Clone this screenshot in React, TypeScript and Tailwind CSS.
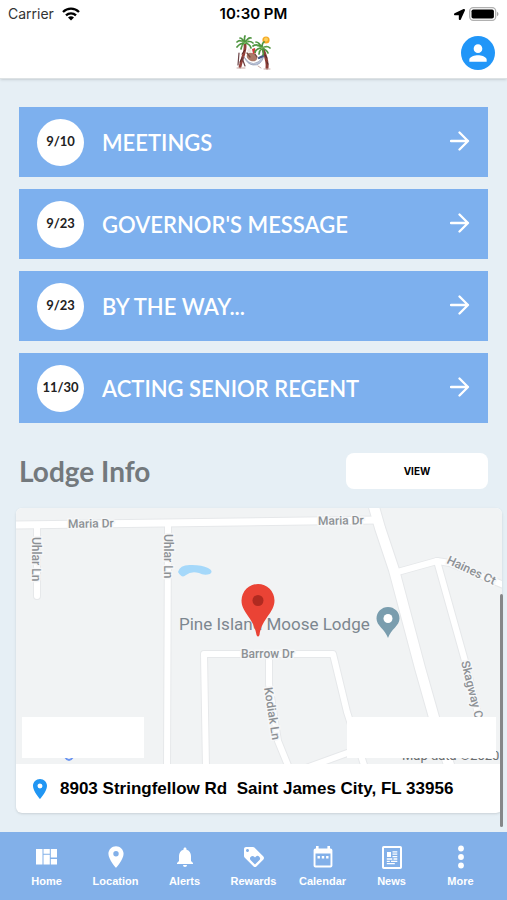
import type { ReactNode } from 'react';
import { FaLocationArrow } from 'react-icons/fa';
import {
  MdLocationOn,
  MdLoyalty,
  MdNotifications,
  MdPerson,
} from 'react-icons/md';

interface Post {
  date: string;
  title: string;
}

interface NavItem {
  label: string;
  icon: ReactNode;
}

const posts: Post[] = [
  { date: '9/10', title: 'MEETINGS' },
  { date: '9/23', title: "GOVERNOR'S MESSAGE" },
  { date: '9/23', title: 'BY THE WAY...' },
  { date: '11/30', title: 'ACTING SENIOR REGENT' },
];

const navItems: NavItem[] = [
  { label: 'Home', icon: <HomeIcon /> },
  { label: 'Location', icon: <MdLocationOn size={26} /> },
  { label: 'Alerts', icon: <MdNotifications size={24} /> },
  { label: 'Rewards', icon: <MdLoyalty size={24} /> },
  { label: 'Calendar', icon: <CalendarIcon /> },
  { label: 'News', icon: <NewsIcon /> },
  { label: 'More', icon: <MoreIcon /> },
];

function HomeIcon() {
  return (
    <svg width="22" height="16" viewBox="0 0 22 16" fill="currentColor">
      <path d="M0 0h6.5v15.5H0zM7.5 0h6.3v4.8H7.5zM7.5 5.8h6.3v9.7H7.5zM14.8 0H21v8.6h-6.2zM14.8 10H21v5.5h-6.2z" />
    </svg>
  );
}

function CalendarIcon() {
  return (
    <svg width="20" height="22" viewBox="0 0 20 22" fill="currentColor">
      <path
        fillRule="evenodd"
        d="M3 0h2.6v2.5h8.8V0H17v2.5h.6A1.8 1.8 0 0 1 19.4 4.3v15.4a1.8 1.8 0 0 1-1.8 1.8H2.4a1.8 1.8 0 0 1-1.8-1.8V4.3A1.8 1.8 0 0 1 2.4 2.5H3zM2.5 7.5v12h15v-12z"
      />
      <path d="M4.5 10h2.400v2.400H4.500zM8.800 10h2.400v2.400H8.800zM13.100 10h2.400v2.400h-2.400z" />
    </svg>
  );
}

function NewsIcon() {
  return (
    <svg width="20" height="23" viewBox="0 0 20 23" fill="none" stroke="currentColor">
      <rect x="1" y="1" width="18" height="21" rx="0.8" strokeWidth="2" />
      <path d="M5 6h4v5H5z" fill="currentColor" stroke="none" />
      <path
        d="M10.5 5.8h4.8M10.5 8.2h4.8M10.5 10.6h4.8M4.8 13h5.5M11.5 13h3.8M4.8 15.3h3M9 15.3h6.3M4.8 17.6h8"
        strokeWidth="1.3"
      />
    </svg>
  );
}

function MoreIcon() {
  return (
    <svg width="8" height="24" viewBox="0 0 8 24" fill="currentColor">
      <circle cx="4" cy="3.5" r="2.9" />
      <circle cx="4" cy="12" r="2.9" />
      <circle cx="4" cy="20.5" r="2.9" />
    </svg>
  );
}

function ArrowIcon() {
  return (
    <svg
      width="20"
      height="22"
      viewBox="0 0 20 22"
      fill="none"
      stroke="currentColor"
      strokeWidth="2.3"
      strokeLinecap="round"
      strokeLinejoin="round"
    >
      <path d="M1 10h17M9.5 1.500l8.500 8.500-8.500 8.500" />
    </svg>
  );
}

function WifiIcon() {
  return (
    <svg width="18" height="14" viewBox="0 0 18 14" fill="none" stroke="#000" strokeWidth="2.3">
      <path d="M1 5a11.4 11.4 0 0 1 16 0" />
      <path d="M4 8.3a7.2 7.2 0 0 1 10 0" />
      <path d="M9 13.6L6 10.6a4.3 4.3 0 0 1 6 0z" fill="#000" stroke="none" />
    </svg>
  );
}

function BatteryIcon() {
  return (
    <svg width="30" height="14" viewBox="0 0 30 14" fill="none">
      <rect x="0.7" y="0.7" width="26" height="12.6" rx="3.5" stroke="#b0b0b0" strokeWidth="1.3" />
      <rect x="2.5" y="2.5" width="22.4" height="9" rx="1.8" fill="#000" />
      <path d="M28 4.8c2 .8 2 3.6 0 4.4z" fill="#a5a5a5" />
    </svg>
  );
}

function LodgeLogo() {
  return (
    <svg width="38" height="36" viewBox="0 0 38 36" fill="none" strokeLinecap="round">
      <circle cx="31" cy="5" r="3.6" fill="#f6a821" />
      <circle cx="31" cy="4.500" r="2" fill="#fbd05f" />
      {/* palm trunks */}
      <path d="M10 9c1 8-3 13-5 23" stroke="#93403a" strokeWidth="2.8" />
      <path d="M10 15l-3 4M7 23l-2 4" stroke="#532727" strokeWidth="1" />
      <path d="M28 14c2 6 5 12 4 19" stroke="#8a3c35" strokeWidth="3" />
      <path d="M30 20l2 3M32 27l1 2" stroke="#4d2929" strokeWidth="1" />
      <path d="M4 18l-1 12M7 23l3 8" stroke="#6b4144" strokeWidth="1.2" />
      {/* hammock */}
      <path d="M9 22q9 14 20-1q-3 10-11 9q-6-1-9-8z" fill="#b9c4da" stroke="#8189a5" strokeWidth="0.6" />
      {/* moose */}
      <ellipse cx="17" cy="22" rx="5.500" ry="4" transform="rotate(25 17 22)" fill="#ac7968" />
      <path d="M12 18l3 4M20 19l2 3" stroke="#734a42" strokeWidth="1.300" />
      <path d="M17 14l3-1 1 5-3 1z" fill="#d13b3c" />
      <path d="M12 16l2-3 3 3-3 2z" fill="#f1e6e2" />
      <path d="M24 23l4-2" stroke="#455888" strokeWidth="2.200" />
      <path d="M2 33h8M26 33l-3-2M29 34h6" stroke="#c8aaa6" strokeWidth="1" />
      {/* leaves */}
      <g stroke="#4f9540" strokeWidth="1.700">
        <path d="M10 8Q5 4 2 7M10 8Q7 3 5 3M10 8Q9 3 10 1M10 8Q13 2 16 3M10 8Q15 5 18 8M10 8Q5 8 2 12M10 8Q15 9 16 13M10 8Q7 9 6 14" />
        <path d="M27 13Q22 8 18 11M27 13Q24 7 21 7M27 13Q27 8 29 7M27 13Q32 10 35 13M27 13Q22 13 20 17M27 13Q24 16 24 19M27 13Q32 15 33 18M27 13Q29 17 28 20" />
      </g>
      <path d="M10 8l-4-2M10 8l4-3M10 8l-3 3M27 13l-5-2M27 13l5-1M27 13l-3 3" stroke="#86bf68" strokeWidth="0.700" />
    </svg>
  );
}

const roads = [
  { d: 'M-4 17L362 12', width: 7 },
  { d: 'M21 17V88', width: 6 },
  { d: 'M152 15L151 260', width: 6 },
  { d: 'M190 260L188 146H317L331 204L349 260', width: 6 },
  { d: 'M253 146V176L262 233L273 260', width: 6 },
  { d: 'M290 260L334 244', width: 6 },
  { d: 'M378 65L421 53L434 55L490 78', width: 6 },
  { d: 'M421 53L449 153L468 230', width: 6 },
  { d: 'M356 -8L364 20L378 62L404 160L421 220L434 260', width: 10 },
];

function LodgeMap() {
  return (
    <svg
      viewBox="0 0 486 256"
      preserveAspectRatio="xMidYMid slice"
      className="block w-full bg-[#f1f3f4]"
      role="img"
      aria-label="Map of Pine Island Moose Lodge"
    >
      <g fill="none" strokeLinejoin="round" strokeLinecap="round">
        {roads.map((road) => (
          <path key={road.d} d={road.d} stroke="#e6e8ea" strokeWidth={road.width + 2} />
        ))}
        {roads.map((road) => (
          <path key={road.d} d={road.d} stroke="#fff" strokeWidth={road.width} />
        ))}
      </g>
      <path d="M162 64q2-8 14-7 10 0 16 3 6 3 2 6-6 2-11-1-8-2-13 2-4 4-8-3z" fill="#a5d8fa" />
      <g
        fontFamily="Roboto, sans-serif"
        fontSize="12"
        fontWeight="500"
        fill="#8d9195"
        stroke="#f6f7f8"
        strokeWidth="3"
        paintOrder="stroke"
      >
        <text x="52" y="20" transform="rotate(-1 52 20)">Maria Dr</text>
        <text x="302" y="17" transform="rotate(-1 302 17)">Maria Dr</text>
        <text x="16" y="29" transform="rotate(90 16 29)">Uhlar Ln</text>
        <text x="148" y="26" transform="rotate(90 148 26)">Uhlar Ln</text>
        <text x="225" y="150">Barrow Dr</text>
        <text x="248" y="180" transform="rotate(81 248 180)">Kodiak Ln</text>
        <text x="430" y="55" transform="rotate(25 430 55)">Haines Ct</text>
        <text x="445" y="154" transform="rotate(76 445 154)">Skagway C</text>
      </g>
      <text x="163" y="122" fontFamily="Roboto, sans-serif" fontSize="17" fill="#7c868f">
        Pine Island Moose Lodge
      </text>
      <path d="M372 99a11.5 11.5 0 0 1 11.5 11.5C383.5 118 375 121 372 130C369 121 360.5 118 360.5 110.5A11.5 11.5 0 0 1 372 99z" fill="#7a9dae" />
      <circle cx="372" cy="110.5" r="4.5" fill="#fff" />
      <path d="M242 76a16.5 16.5 0 0 1 16.5 16.5C258.500 105 246 110 243.500 127Q242 130 240.500 127C238 110 225.500 105 225.500 92.500A16.500 16.500 0 0 1 242 76z" fill="#ea4335" />
      <circle cx="242" cy="92.5" r="5.5" fill="#b02a20" />
      <path d="M49 249q4 6 8 0" fill="none" stroke="#6994f1" strokeWidth="2" />
      <text x="386" y="252" fontFamily="Roboto, sans-serif" fontSize="13" fill="#6b6e70">
        Map data ©2020
      </text>
      <path d="M6 209h122v41H6zM331 209h149v41H331z" fill="#fff" />
    </svg>
  );
}

function StatusBar() {
  return (
    <div className="grid h-7 grid-cols-3 items-center px-2 font-[Inter,sans-serif] text-sm text-black">
      <div className="flex items-center gap-2 text-[#333]">
        <span>Carrier</span>
        <WifiIcon />
      </div>
      <div className="text-center text-[15px] font-semibold">10:30 PM</div>
      <div className="flex items-center justify-end gap-1">
        <FaLocationArrow size={11} />
        <BatteryIcon />
      </div>
    </div>
  );
}

function PostRow({ post }: { post: Post }) {
  return (
    <button
      type="button"
      className="flex h-[70px] w-full items-center bg-[#7db0ee] px-[18px] text-left text-white"
    >
      <span className="flex size-[47px] shrink-0 items-center justify-center rounded-full bg-white text-[13px] font-bold text-[#222]">
        {post.date}
      </span>
      <span className="ml-[18px] flex-1 text-[22px] font-semibold">{post.title}</span>
      <ArrowIcon />
    </button>
  );
}

export default function App() {
  return (
    <div className="relative flex min-h-screen flex-col bg-[#e6eff5] font-[Lato,sans-serif]">
      <header className="border-b border-[#dde2e4] bg-white shadow-sm">
        <StatusBar />
        <div className="grid h-[50px] grid-cols-3 items-center px-3">
          <div className="col-start-2 flex justify-center">
            <LodgeLogo />
          </div>
          <button
            type="button"
            aria-label="Profile"
            className="flex size-[34px] items-center justify-center justify-self-end rounded-full bg-[#2196f8] text-white"
          >
            <MdPerson size={26} />
          </button>
        </div>
      </header>

      <main className="flex-1 pt-7 pb-[19px]">
        <div className="flex flex-col gap-3 px-[19px]">
          {posts.map((post) => (
            <PostRow key={post.title} post={post} />
          ))}
        </div>

        <div className="mt-[30px] flex items-center justify-between px-[19px]">
          <h2 className="text-[28px] leading-9 font-bold text-[#73797d]">Lodge Info</h2>
          <button
            type="button"
            className="h-9 w-[142px] rounded-lg bg-white font-[Inter,sans-serif] text-[10px] font-bold text-black"
          >
            VIEW
          </button>
        </div>

        <section className="mt-[19px] mr-[5px] ml-4 overflow-hidden rounded-md bg-white shadow">
          <LodgeMap />
          <div className="flex h-[49px] items-center gap-2 px-3 font-['Liberation_Sans',sans-serif] text-[17px] font-bold text-black">
            <MdLocationOn size={24} className="shrink-0 text-[#2196f3]" />
            <span className="whitespace-pre">8903 Stringfellow Rd  Saint James City, FL 33956</span>
          </div>
        </section>
      </main>

      <nav className="flex h-[68px] bg-[#82b0e9] px-3 font-['Liberation_Sans',sans-serif] text-[11px] font-bold text-white">
        {navItems.map((item) => (
          <a key={item.label} href="#" className="flex flex-1 flex-col items-center pt-3">
            <span className="flex h-[26px] items-center">{item.icon}</span>
            <span className="mt-[3px] leading-4">{item.label}</span>
          </a>
        ))}
      </nav>

      {/* scroll indicator */}
      <div className="absolute right-1 bottom-[73px] h-[233px] w-[3px] rounded-full bg-[#858789]" />
    </div>
  );
}
